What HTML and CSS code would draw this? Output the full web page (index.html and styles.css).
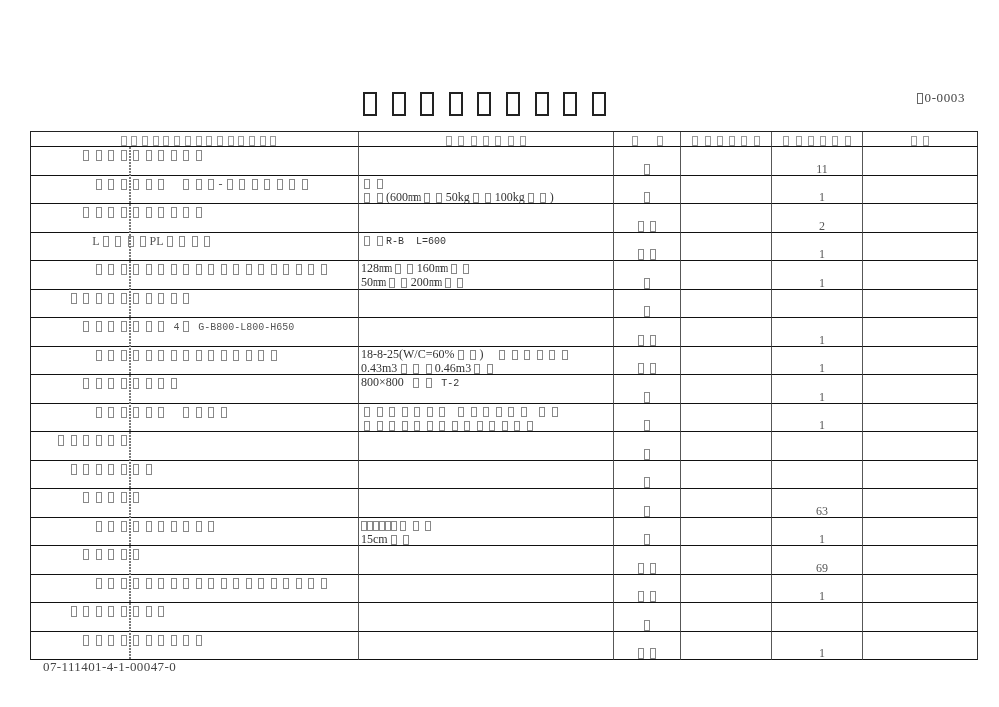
FILE: index.html
```html
<!DOCTYPE html>
<html lang="ja">
<head>
<meta charset="utf-8">
<title>sheet</title>
<link rel="stylesheet" href="styles.css">
</head>
<body>
<div class="page">
  <div class="head">
    <div class="title"><i class="tx"></i><i class="tx"></i><i class="tx"></i><i class="tx"></i><i class="tx"></i><i class="tx"></i><i class="tx"></i><i class="tx"></i><i class="tx"></i></div>
    <div class="code"><i class="cx"></i>0-0003</div>
  </div>

  <div class="sheet">
    <div class="dots"></div>

    <div class="cell hd h1"><i class="hx"></i><i class="hx"></i><i class="hx"></i><i class="hx"></i><i class="hx"></i><i class="hx"></i><i class="hx"></i><i class="hx"></i><i class="hx"></i><i class="hx"></i><i class="hx"></i><i class="hx"></i><i class="hx"></i><i class="hx"></i><i class="hx"></i></div>
    <div class="cell hd"><i class="hx"></i><i class="hx"></i><i class="hx"></i><i class="hx"></i><i class="hx"></i><i class="hx"></i><i class="hx"></i></div>
    <div class="cell hd h3"><i class="hx"></i><i class="hx"></i></div>
    <div class="cell hd"><i class="hx"></i><i class="hx"></i><i class="hx"></i><i class="hx"></i><i class="hx"></i><i class="hx"></i></div>
    <div class="cell hd"><i class="hx"></i><i class="hx"></i><i class="hx"></i><i class="hx"></i><i class="hx"></i><i class="hx"></i></div>
    <div class="cell hd last"><i class="hx"></i><i class="hx"></i></div>

    <!-- row 1 -->
    <div class="cell c1 l2"><i class="x"></i><i class="x"></i><i class="x"></i><i class="x"></i><i class="x"></i><i class="x"></i><i class="x"></i><i class="x"></i><i class="x"></i><i class="x"></i></div>
    <div class="cell c2"></div>
    <div class="cell c3"><i class="x"></i></div>
    <div class="cell"></div>
    <div class="cell c5">11</div>
    <div class="cell last"></div>

    <!-- row 2 -->
    <div class="cell c1 l3"><i class="x"></i><i class="x"></i><i class="x"></i><i class="x"></i><i class="x"></i><i class="x"></i><i class="sp"></i><i class="x"></i><i class="x"></i><i class="x"></i><span class="hy">-</span><i class="x"></i><i class="x"></i><i class="x"></i><i class="x"></i><i class="x"></i><i class="x"></i><i class="x"></i></div>
    <div class="cell c2"><i class="x"></i><i class="x"></i><br><i class="x"></i><i class="x"></i>(600<span class="mm">mm</span><i class="x"></i><i class="x"></i>50kg<i class="x"></i><i class="x"></i>100kg<i class="x"></i><i class="x"></i>)</div>
    <div class="cell c3"><i class="x"></i></div>
    <div class="cell"></div>
    <div class="cell c5">1</div>
    <div class="cell last"></div>

    <!-- row 3 -->
    <div class="cell c1 l2"><i class="x"></i><i class="x"></i><i class="x"></i><i class="x"></i><i class="x"></i><i class="x"></i><i class="x"></i><i class="x"></i><i class="x"></i><i class="x"></i></div>
    <div class="cell c2"></div>
    <div class="cell c3"><i class="x"></i><i class="x"></i></div>
    <div class="cell"></div>
    <div class="cell c5">2</div>
    <div class="cell last"></div>

    <!-- row 4 -->
    <div class="cell c1 l3">L<i class="x"></i><i class="x"></i><i class="x"></i><i class="x"></i>PL<i class="x"></i><i class="x"></i><i class="x"></i><i class="x"></i></div>
    <div class="cell c2"><i class="x"></i><i class="x"></i><span class="mono">R-B&nbsp;&nbsp;L=600</span></div>
    <div class="cell c3"><i class="x"></i><i class="x"></i></div>
    <div class="cell"></div>
    <div class="cell c5">1</div>
    <div class="cell last"></div>

    <!-- row 5 -->
    <div class="cell c1 l3"><i class="x"></i><i class="x"></i><i class="x"></i><i class="x"></i><i class="x"></i><i class="x"></i><i class="x"></i><i class="x"></i><i class="x"></i><i class="x"></i><i class="x"></i><i class="x"></i><i class="x"></i><i class="x"></i><i class="x"></i><i class="x"></i><i class="x"></i><i class="x"></i><i class="x"></i></div>
    <div class="cell c2">128<span class="mm">mm</span><i class="x"></i><i class="x"></i>160<span class="mm">mm</span><i class="x"></i><i class="x"></i><br>50<span class="mm">mm</span><i class="x"></i><i class="x"></i>200<span class="mm">mm</span><i class="x"></i><i class="x"></i></div>
    <div class="cell c3"><i class="x"></i></div>
    <div class="cell"></div>
    <div class="cell c5">1</div>
    <div class="cell last"></div>

    <!-- row 6 -->
    <div class="cell c1 l1"><i class="x"></i><i class="x"></i><i class="x"></i><i class="x"></i><i class="x"></i><i class="x"></i><i class="x"></i><i class="x"></i><i class="x"></i><i class="x"></i></div>
    <div class="cell c2"></div>
    <div class="cell c3"><i class="x"></i></div>
    <div class="cell"></div>
    <div class="cell c5"></div>
    <div class="cell last"></div>

    <!-- row 7 -->
    <div class="cell c1 l2"><i class="x"></i><i class="x"></i><i class="x"></i><i class="x"></i><i class="x"></i><i class="x"></i><i class="x"></i><i class="hs"></i><span class="mono">4</span><i class="x"></i><i class="hs"></i><span class="mono">G-B800-L800-H650</span></div>
    <div class="cell c2"></div>
    <div class="cell c3"><i class="x"></i><i class="x"></i></div>
    <div class="cell"></div>
    <div class="cell c5">1</div>
    <div class="cell last"></div>

    <!-- row 8 -->
    <div class="cell c1 l3"><i class="x"></i><i class="x"></i><i class="x"></i><i class="x"></i><i class="x"></i><i class="x"></i><i class="x"></i><i class="x"></i><i class="x"></i><i class="x"></i><i class="x"></i><i class="x"></i><i class="x"></i><i class="x"></i><i class="x"></i></div>
    <div class="cell c2">18-8-25(W/C=60%<i class="x"></i><i class="x"></i>)<i class="sp"></i><i class="x"></i><i class="x"></i><i class="x"></i><i class="x"></i><i class="x"></i><i class="x"></i><br>0.43m3<i class="x"></i><i class="x"></i><i class="x"></i>0.46m3<i class="x"></i><i class="x"></i></div>
    <div class="cell c3"><i class="x"></i><i class="x"></i></div>
    <div class="cell"></div>
    <div class="cell c5">1</div>
    <div class="cell last"></div>

    <!-- row 9 -->
    <div class="cell c1 l2"><i class="x"></i><i class="x"></i><i class="x"></i><i class="x"></i><i class="x"></i><i class="x"></i><i class="x"></i><i class="x"></i></div>
    <div class="cell c2">800×800<i class="hs"></i><i class="x"></i><i class="x"></i><i class="hs"></i><span class="mono">T-2</span></div>
    <div class="cell c3"><i class="x"></i></div>
    <div class="cell"></div>
    <div class="cell c5">1</div>
    <div class="cell last"></div>

    <!-- row 10 -->
    <div class="cell c1 l3"><i class="x"></i><i class="x"></i><i class="x"></i><i class="x"></i><i class="x"></i><i class="x"></i><i class="sp"></i><i class="x"></i><i class="x"></i><i class="x"></i><i class="x"></i></div>
    <div class="cell c2"><i class="x"></i><i class="x"></i><i class="x"></i><i class="x"></i><i class="x"></i><i class="x"></i><i class="x"></i><i class="hs"></i><i class="x"></i><i class="x"></i><i class="x"></i><i class="x"></i><i class="x"></i><i class="x"></i><i class="hs"></i><i class="x"></i><i class="x"></i><br><i class="x"></i><i class="x"></i><i class="x"></i><i class="x"></i><i class="x"></i><i class="x"></i><i class="x"></i><i class="x"></i><i class="x"></i><i class="x"></i><i class="x"></i><i class="x"></i><i class="x"></i><i class="x"></i></div>
    <div class="cell c3"><i class="x"></i></div>
    <div class="cell"></div>
    <div class="cell c5">1</div>
    <div class="cell last"></div>

    <!-- row 11 -->
    <div class="cell c1 l0"><i class="x"></i><i class="x"></i><i class="x"></i><i class="x"></i><i class="x"></i><i class="x"></i></div>
    <div class="cell c2"></div>
    <div class="cell c3"><i class="x"></i></div>
    <div class="cell"></div>
    <div class="cell c5"></div>
    <div class="cell last"></div>

    <!-- row 12 -->
    <div class="cell c1 l1"><i class="x"></i><i class="x"></i><i class="x"></i><i class="x"></i><i class="x"></i><i class="x"></i><i class="x"></i></div>
    <div class="cell c2"></div>
    <div class="cell c3"><i class="x"></i></div>
    <div class="cell"></div>
    <div class="cell c5"></div>
    <div class="cell last"></div>

    <!-- row 13 -->
    <div class="cell c1 l2"><i class="x"></i><i class="x"></i><i class="x"></i><i class="x"></i><i class="x"></i></div>
    <div class="cell c2"></div>
    <div class="cell c3"><i class="x"></i></div>
    <div class="cell"></div>
    <div class="cell c5">63</div>
    <div class="cell last"></div>

    <!-- row 14 -->
    <div class="cell c1 l3"><i class="x"></i><i class="x"></i><i class="x"></i><i class="x"></i><i class="x"></i><i class="x"></i><i class="x"></i><i class="x"></i><i class="x"></i><i class="x"></i></div>
    <div class="cell c2"><i class="xn"></i><i class="xn"></i><i class="xn"></i><i class="xn"></i><i class="xn"></i><i class="xn"></i><i class="x"></i><i class="x"></i><i class="x"></i><br>15cm<i class="x"></i><i class="x"></i></div>
    <div class="cell c3"><i class="x"></i></div>
    <div class="cell"></div>
    <div class="cell c5">1</div>
    <div class="cell last"></div>

    <!-- row 15 -->
    <div class="cell c1 l2"><i class="x"></i><i class="x"></i><i class="x"></i><i class="x"></i><i class="x"></i></div>
    <div class="cell c2"></div>
    <div class="cell c3"><i class="x"></i><i class="x"></i></div>
    <div class="cell"></div>
    <div class="cell c5">69</div>
    <div class="cell last"></div>

    <!-- row 16 -->
    <div class="cell c1 l3"><i class="x"></i><i class="x"></i><i class="x"></i><i class="x"></i><i class="x"></i><i class="x"></i><i class="x"></i><i class="x"></i><i class="x"></i><i class="x"></i><i class="x"></i><i class="x"></i><i class="x"></i><i class="x"></i><i class="x"></i><i class="x"></i><i class="x"></i><i class="x"></i><i class="x"></i></div>
    <div class="cell c2"></div>
    <div class="cell c3"><i class="x"></i><i class="x"></i></div>
    <div class="cell"></div>
    <div class="cell c5">1</div>
    <div class="cell last"></div>

    <!-- row 17 -->
    <div class="cell c1 l1"><i class="x"></i><i class="x"></i><i class="x"></i><i class="x"></i><i class="x"></i><i class="x"></i><i class="x"></i><i class="x"></i></div>
    <div class="cell c2"></div>
    <div class="cell c3"><i class="x"></i></div>
    <div class="cell"></div>
    <div class="cell c5"></div>
    <div class="cell last"></div>

    <!-- row 18 -->
    <div class="cell c1 l2"><i class="x"></i><i class="x"></i><i class="x"></i><i class="x"></i><i class="x"></i><i class="x"></i><i class="x"></i><i class="x"></i><i class="x"></i><i class="x"></i></div>
    <div class="cell c2"></div>
    <div class="cell c3"><i class="x"></i><i class="x"></i></div>
    <div class="cell"></div>
    <div class="cell c5">1</div>
    <div class="cell last"></div>
  </div>

  <div class="foot">07-111401-4-1-00047-0</div>
</div>
</body>
</html>
```

FILE: styles.css
```css
html, body {
  margin: 0;
  padding: 0;
  background: #ffffff;
}

body {
  font-family: "Liberation Serif", "Times New Roman", serif;
  color: #333333;
}

.page {
  width: 999px;
  will-change: transform;
}

/* ---------- header ---------- */
.head {
  height: 131px;
  box-sizing: border-box;
  padding: 92px 34px 0 363px;
  display: flex;
  align-items: flex-start;
}

.title {
  display: flex;
  gap: 14.6px;
}

.tx {
  display: block;
  width: 14px;
  height: 24px;
  border: 2px solid #222222;
  box-sizing: border-box;
}

.code {
  margin-left: auto;
  display: flex;
  align-items: center;
  font-size: 13px;
  line-height: 12px;
  letter-spacing: 0.6px;
  color: #444444;
}

.cx {
  display: block;
  width: 6px;
  height: 11px;
  border: 1px solid #666666;
  box-sizing: border-box;
  margin-right: 2px;
}

/* ---------- sheet ---------- */
.sheet {
  position: relative;
  overflow: hidden;
  margin-left: 30px;
  width: 948px;
  box-sizing: border-box;
  border-left: 1px solid #222222;
  border-top: 1px solid #222222;
  display: grid;
  grid-template-columns: 328px 255px 67px 91px 91px 115px;
  grid-template-rows: 15px repeat(18, 28.5px);
}

.dots {
  position: absolute;
  left: 98px;
  top: 15px;
  bottom: 1px;
  width: 2px;
  background: repeating-linear-gradient(to bottom, #7a7a7a 0 2px, transparent 2px 3px);
  pointer-events: none;
}

.cell {
  box-sizing: border-box;
  border-right: 1px solid #585858;
  border-bottom: 1px solid #111111;
  white-space: nowrap;
  overflow: hidden;
}

.cell.last {
  border-right-color: #333333;
}

/* header row */
.hd {
  display: flex;
  justify-content: center;
  align-items: flex-end;
}

.hx {
  display: block;
  width: 6px;
  height: 10px;
  border: 1px solid #9a9a9a;
  box-sizing: border-box;
  margin: 0 3.15px;
}

.h1 {
  padding-left: 8px;
}

.h1 .hx {
  margin: 0 2.35px;
}

.h3 .hx {
  margin: 0 9.5px;
}

/* tofu boxes */
.x {
  display: inline-block;
  width: 6px;
  height: 11px;
  border: 1px solid #888888;
  box-sizing: border-box;
  margin: 0 3.25px;
  vertical-align: -2px;
}

.xn {
  display: inline-block;
  width: 6px;
  height: 10px;
  border: 1px solid #888888;
  box-sizing: border-box;
  vertical-align: -2px;
}

.sp {
  display: inline-block;
  width: 12.5px;
}

.hs {
  display: inline-block;
  width: 6.25px;
}

.hy {
  display: inline-block;
  width: 6.25px;
  text-align: center;
}

.mono {
  font-family: "Liberation Mono", "Courier New", monospace;
  font-size: 10px;
}

.mm {
  display: inline-block;
  letter-spacing: -2px;
  transform: scaleX(0.8);
  transform-origin: left;
  margin-right: -2px;
}

/* column 1 */
.c1 {
  padding-top: 2px;
  font-size: 12px;
  line-height: 12px;
  color: #555555;
}

.l0 { padding-left: 23.75px; }
.l1 { padding-left: 36.25px; }
.l2 { padding-left: 48.75px; }
.l3 { padding-left: 61.25px; }

/* column 2 */
.c2 {
  padding-left: 2px;
  font-size: 12px;
  line-height: 14px;
  color: #333333;
}

.c2 .x {
  height: 10px;
}

/* unit column */
.c3 {
  display: flex;
  justify-content: center;
  align-items: flex-end;
}

.c3 .x {
  display: block;
}

/* quantity column */
.c5 {
  display: flex;
  justify-content: center;
  align-items: flex-end;
  padding-left: 10px;
  font-size: 12px;
  line-height: 12px;
  color: #555555;
}

/* footer */
.foot {
  padding-left: 43px;
  font-size: 13px;
  line-height: 13px;
  letter-spacing: 0.4px;
  color: #444444;
}
```
